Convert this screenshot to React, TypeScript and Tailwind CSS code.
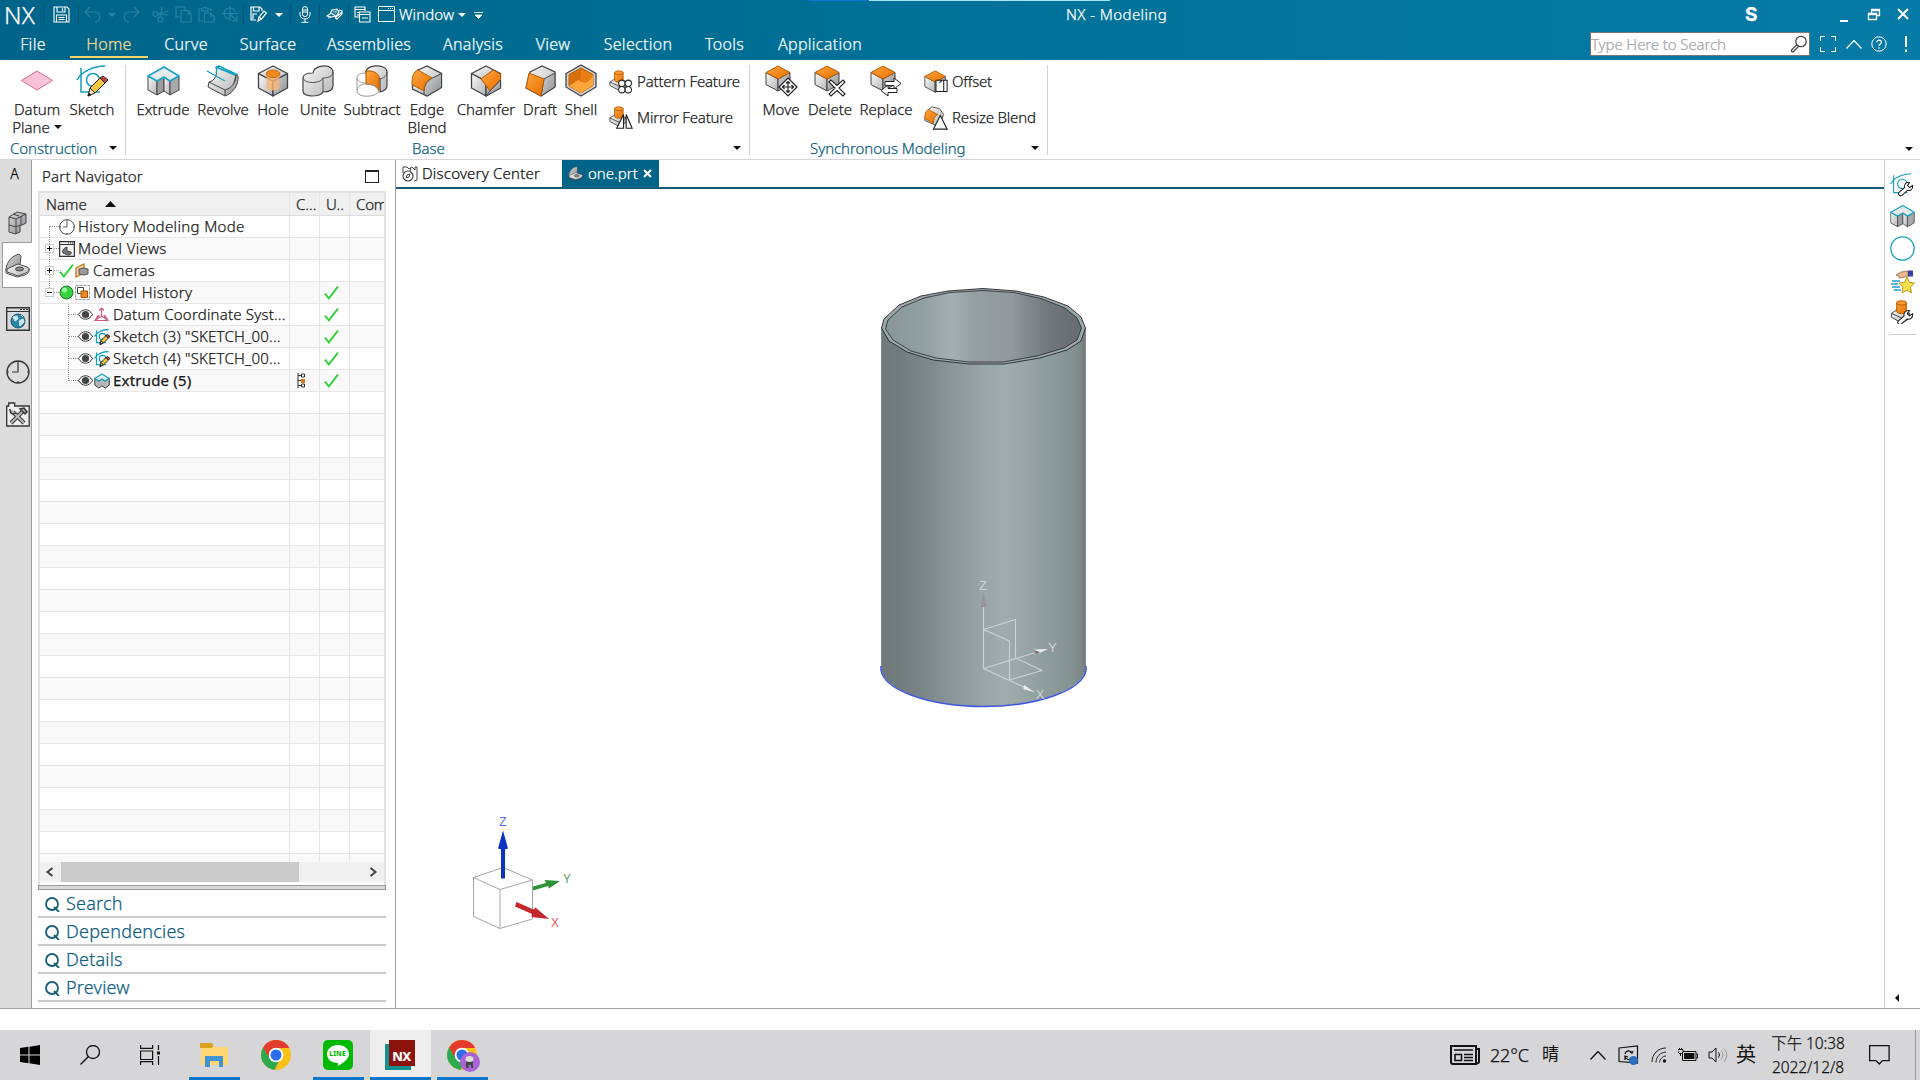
import type { ReactNode } from "react";

type IconProps = { w: number; h?: number; box?: string; cls?: string; children: ReactNode };

function Ico({ w, h, box, cls = "", children }: IconProps) {
  return (
    <svg width={w} height={h ?? w} viewBox={box ?? `0 0 ${w} ${h ?? w}`} fill="none" className={`shrink-0 ${cls}`}>
      {children}
    </svg>
  );
}

const Down = ({ cls = "text-[#111]" }: { cls?: string }) => (
  <svg width="8" height="4" viewBox="0 0 8 4" className={`shrink-0 ${cls}`}>
    <path d="M0 0h8L4 4z" fill="currentColor" />
  </svg>
);

const Defs = () => (
  <svg width="0" height="0" className="absolute">
    <defs>
      <linearGradient id="or" x1="0" y1="0" x2="1" y2="1">
        <stop offset="0" stopColor="#ffa640" />
        <stop offset="1" stopColor="#e86f00" />
      </linearGradient>
      <linearGradient id="gr" x1="0" y1="0" x2="1" y2="1">
        <stop offset="0" stopColor="#fafafa" />
        <stop offset="1" stopColor="#b4b4b6" />
      </linearGradient>
      <linearGradient id="dk" x1="0" y1="0" x2="1" y2="1">
        <stop offset="0" stopColor="#d2d3d5" />
        <stop offset="1" stopColor="#8e9093" />
      </linearGradient>
      <linearGradient id="wall" x1="0" x2="1" y1="0" y2="0">
        <stop offset="0" stopColor="#6f797b" />
        <stop offset="0.1" stopColor="#727d7f" />
        <stop offset="0.2" stopColor="#7b8689" />
        <stop offset="0.35" stopColor="#8a9698" />
        <stop offset="0.5" stopColor="#99a5a6" />
        <stop offset="0.6" stopColor="#a1acad" />
        <stop offset="0.7" stopColor="#99a5a6" />
        <stop offset="0.85" stopColor="#8b9999" />
        <stop offset="0.94" stopColor="#839191" />
        <stop offset="0.97" stopColor="#7f8b8b" />
        <stop offset="1" stopColor="#717a7c" />
      </linearGradient>
      <linearGradient id="inner" x1="0" x2="1" y1="0" y2="0">
        <stop offset="0" stopColor="#88969a" />
        <stop offset="0.2" stopColor="#93a0a2" />
        <stop offset="0.34" stopColor="#a3afb0" />
        <stop offset="0.45" stopColor="#969fa1" />
        <stop offset="0.65" stopColor="#92999c" />
        <stop offset="0.72" stopColor="#838a8d" />
        <stop offset="0.85" stopColor="#6f7679" />
        <stop offset="1" stopColor="#666d70" />
      </linearGradient>
    </defs>
  </svg>
);

/* ---------- solids shared by the ribbon and the trees ---------- */

const ExtrudeShape = () => (
  <g strokeLinejoin="round">
    <path d="M1 11v14l9 5V16z" fill="url(#gr)" stroke="#444" />
    <path d="M10 16v14l7-4V12z" fill="#9b9da0" stroke="#444" />
    <path d="M17 12v14l6 4V16z" fill="url(#gr)" stroke="#444" />
    <path d="M23 16v14l9-5V11z" fill="#a6a8ab" stroke="#444" />
    <path d="M1 11 17 2l15 9-9 5-6-4-7 4z" fill="#e6e8ea" stroke="#18a3c4" strokeWidth="1.6" />
  </g>
);

const SketchShape = ({ tool }: { tool: ReactNode }) => (
  <g>
    <path d="M5 3v24h19M1 15C6 6 18 1 29 1" stroke="#14a0c0" strokeWidth="1.5" />
    <circle cx="17" cy="15" r="6.5" stroke="#14a0c0" strokeWidth="1.5" />
    {tool}
  </g>
);

const Pencil = () => (
  <g strokeLinejoin="round" stroke="#222">
    <path d="m12 31 2-8 5 5z" fill="#f7e6b4" />
    <path d="m14 23 10-10 5 5-10 10z" fill="#f3c740" />
    <path d="m24 13 3-2 5 4-3 3z" fill="#c64444" />
    <path d="m12 31 .8-3 2 2z" fill="#111" />
  </g>
);

const Wrench = () => (
  <path
    d="m12 27 8-7c-1-4 2-8 7-7l-3 4 3 3 4-3c1 5-3 8-7 7l-8 7c-3 1-5-1-4-4z"
    fill="#fff"
    stroke="#222"
    strokeWidth="1.4"
    strokeLinejoin="round"
  />
);

const Cube = ({ top = "url(#gr)" }: { top?: string }) => (
  <g stroke="#3f4144" strokeWidth="1.3" strokeLinejoin="round">
    <path d="M1.5 8.500v14.500L16 31V16z" fill="url(#gr)" />
    <path d="M30.500 8.500v14.500L16 31V16z" fill="url(#dk)" />
    <path d="M1.500 8.500 16 1l14.500 7.500L16 16z" fill={top} />
  </g>
);

const SmallCube = () => (
  <g stroke="#3f4144" strokeLinejoin="round">
    <path d="M1 7.500v12L13 26V14z" fill="url(#gr)" />
    <path d="M25 7.500v12L13 26V14z" fill="url(#dk)" />
    <path d="M1 7.500 13 1l12 6.500L13 14z" fill="url(#or)" stroke="#b35a00" />
  </g>
);

const Boss = () => (
  <g strokeLinejoin="round">
    <path d="M1 14 9 9l11 5v5l-8 5-11-6z" fill="url(#gr)" stroke="#444" />
    <path d="m1 14 11 5v5M12 19l8-5" stroke="#444" />
    <path d="M6.500 3v9c0 3 10 3 10 0V3z" fill="url(#or)" stroke="#b35a00" />
    <ellipse cx="11.500" cy="3.200" rx="5" ry="2.200" fill="#ff9a2e" stroke="#b35a00" />
  </g>
);

const Bracket = () => (
  <g strokeLinejoin="round">
    <path d="M1 16C2 8 7 3 14 1l2 2-1 9-7 6-5 1z" fill="url(#dk)" stroke="#4a4c4e" />
    <path d="m2 16 11-5 9 3c3 1 3 4-1 6l-8 3-11-4z" fill="url(#gr)" stroke="#4a4c4e" />
    <ellipse cx="14.500" cy="16" rx="4" ry="2" fill="#888" stroke="#444" />
    <path d="M1 16v4l11 4 8-2c4-2 4-3 4-6" stroke="#4a4c4e" />
  </g>
);

/* ---------- title bar ---------- */

const Bar = () => <span className="h-[21px] w-px bg-[#0a5474]" />;

const qi = "flex h-[28px] items-center justify-center";

function TitleBar() {
  return (
    <div className="relative flex h-[29px] items-center text-white">
      <span className="flex h-[29px] w-[43px] items-center pl-[4px] text-[24px] leading-none tracking-[0.2px]">NX</span>
      <Bar />
      <span className={`${qi} w-[34px]`}>
        <Ico w={17}>
          <path d="M1 1h13l2 2v13H1zM4 1v5h8V1M9.500 2v3M3.500 16V9h10v7M5.500 11.500h6M5.500 13.500h6" stroke="#fff" strokeWidth="1.1" />
        </Ico>
      </span>
      <Bar />
      <span className={`${qi} w-[26px] text-[#2a83a6]`}>
        <Ico w={17}>
          <path d="M6 1 1 6l5 5M1 6h9c8 0 7 9 1 10" stroke="currentColor" strokeWidth="1.200" />
        </Ico>
      </span>
      <span className={`${qi} w-[13px]`}><Down cls="text-[#2a83a6]" /></span>
      <span className={`${qi} w-[26px] text-[#2a83a6]`}>
        <Ico w={17}>
          <path d="m11 1 5 5-5 5M16 6H7C-1 6 0 15 6 16" stroke="currentColor" strokeWidth="1.200" />
        </Ico>
      </span>
      <span className="flex pl-[5px] text-[#2a83a6]">
        <span className={`${qi} w-[23px]`}>
          <Ico w={17}>
            <g stroke="currentColor" strokeWidth="1.100">
              <circle cx="3.500" cy="8" r="2.500" />
              <circle cx="8.500" cy="13.500" r="2.500" />
              <path d="M6 8.500 16 5M8 11l2-10M6 8l10 1" />
            </g>
          </Ico>
        </span>
        <span className={`${qi} w-[23px]`}>
          <Ico w={17}>
            <path d="M5 11H1V1h9v3M6 4.500h7l3 3V16H6zM13 4.500V8h3" stroke="currentColor" strokeWidth="1.100" />
          </Ico>
        </span>
        <span className={`${qi} w-[23px]`}>
          <Ico w={17}>
            <path d="M5 15H1V3h3m6 0h3v2M4 2h2l1-1 1 1h2v3H4zM6.500 7h6l3.500 3v6H6.500zM12.500 7v3H16" stroke="currentColor" strokeWidth="1.100" />
          </Ico>
        </span>
        <span className={`${qi} w-[25px]`}>
          <Ico w={17}>
            <path d="M8 0v15M0 7.500h16M13 6A5.500 5.500 0 1 0 7 13M8 8l7 7M15 10v5h-5" stroke="currentColor" strokeWidth="1.100" />
          </Ico>
        </span>
      </span>
      <Bar />
      <span className={`${qi} w-[28px]`}>
        <Ico w={17}>
          <path d="M6 14H1V1h9l2 2v2M3.500 1v4H9V1M3 13V8h4M8 15l1-4 5-6 2.500 2-5 6zM9 11l2.500 2" stroke="#fff" strokeWidth="1.200" />
        </Ico>
      </span>
      <span className={`${qi} w-[18px] pr-1`}><Down cls="text-white" /></span>
      <Bar />
      <span className={`${qi} w-[28px]`}>
        <Ico w={12} h={17}>
          <rect x="3.500" y="0.600" width="5" height="10" rx="2.500" stroke="#fff" />
          <path d="M1 6v2.500c0 6 10 6 10 0V6M6 13v3M2.500 16.300h7M4 4h4M4 6h4" stroke="#fff" />
        </Ico>
      </span>
      <Bar />
      <span className={`${qi} w-[28px]`}>
        <Ico w={17}>
          <path d="m1 10 3-2 2-4 5-1 2 3-3 4-5 1zM5 7l6 4M9 12l7-6M13 4l3 1v3l-5 5-2-1M6 11l-4 1" stroke="#fff" strokeWidth="1.100" />
          <path d="m6 5 5-1 1 2-3 2z" fill="#fff" opacity=".4" />
        </Ico>
      </span>
      <Bar />
      <span className={`${qi} w-[27px]`}>
        <Ico w={17}>
          <path d="M5 11H1V1h10v4M1 3.500h10M5.500 6H16v10H5.500zM5.500 8.500H16M3 6.500h2M3 9h2M8 12h6" stroke="#fff" strokeWidth="1.100" />
        </Ico>
      </span>
      <span className={`${qi} w-[21px]`}>
        <Ico w={17}>
          <path d="M.5.500h16v15H.5zM.5 4.500h16M10 2.500h1m1 0h1m1 0h1" stroke="#fff" />
        </Ico>
      </span>
      <span className="w-[61px] pb-[2px] pl-[2px] text-[15px] leading-[26px] tracking-[0.1px]">Window</span>
      <Down cls="text-white" />
      <Ico w={9} h={7} cls="ml-[8px] mt-[2px]">
        <path d="M0 .5h9M1 3h7L4.500 6.500z" stroke="#fff" fill="#fff" strokeWidth=".8" />
      </Ico>
      <span className="ml-[583px] pb-px text-[15px] tracking-[0.4px]">NX - Modeling</span>
      <span className="ml-auto mr-[76px] w-[12px] font-['Inter'] text-[19px] font-bold leading-[29px]">S</span>
      <Ico w={80} h={15} cls="mr-[7px]">
        <path d="M7 14h8" stroke="#fff" strokeWidth="2" />
        <path d="M38.500 6.500V2.500h8v6h-3M35.500 6.500h8v6h-8zM38 3.500h9M35 7.500h9" stroke="#fff" strokeWidth="1.300" />
        <path d="m65 2 10 10M75 2 65 12" stroke="#fff" strokeWidth="2" />
      </Ico>
      <span className="absolute left-[809px] top-0 h-px w-[60px] bg-[#0a78d4]" />
      <span className="absolute left-[869px] top-0 h-px w-[241px] bg-[#a5e3f5]" />
    </div>
  );
}

const menus: [string, string][] = [
  ["Curve", "w-[76px]"],
  ["Surface", "w-[88px]"],
  ["Assemblies", "w-[114px]"],
  ["Analysis", "w-[94px]"],
  ["View", "w-[66px]"],
  ["Selection", "w-[104px]"],
  ["Tools", "w-[69px]"],
  ["Application", "w-[122px]"],
];

function MenuBar() {
  return (
    <div className="flex h-[31px] text-[16px] leading-[30px] tracking-[0.3px] text-[#f4fbfe]">
      <span className="mr-[4px] w-[66px] text-center">File</span>
      <span className="h-[29px] w-[78px] border-b-2 border-[#f5d264] text-center leading-[30px] text-[#f5d98a]">Home</span>
      {menus.map(([t, w]) => (
        <span key={t} className={`${w} text-center`}>{t}</span>
      ))}
      <div className="ml-auto mr-[12px] flex items-center pb-px">
        <span className="flex h-[24px] w-[220px] items-center justify-between border border-[#777] bg-white pr-px text-[15px] leading-[20px] tracking-[-0.1px] text-[#a8a8a8]">
          Type Here to Search
          <Ico w={18}>
            <circle cx="11" cy="6.500" r="5.200" stroke="#444" strokeWidth="1.300" />
            <path d="M7 9.500 1.500 15c-.5 1.500 1 2.500 2 1.500L9 11" stroke="#444" strokeWidth="1.300" />
          </Ico>
        </span>
        <Ico w={16} cls="ml-[10px]"><path d="M.5 5V.5H5M11 .5h4.500V5M15.500 11v4.500H11M5 15.500H.5V11" stroke="#fff" /></Ico>
        <Ico w={16} h={9} cls="ml-[10px]"><path d="m.5 8.500 7.500-8 7.500 8" stroke="#fff" strokeWidth="1.200" /></Ico>
        <Ico w={16} cls="ml-[9px]">
          <circle cx="8" cy="8" r="7.200" stroke="#fff" />
          <path d="M5.800 6.300c0-3 4.600-3 4.600 0C10.400 8 8 8 8 10M8 11.300v1.400" stroke="#fff" strokeWidth="1.200" />
        </Ico>
        <Ico w={4} h={16} cls="ml-[17px]"><path d="M2 0v11M2 13.500V16" stroke="#fff" strokeWidth="2" /></Ico>
      </div>
    </div>
  );
}

/* ---------- ribbon ---------- */

function Big({ w, label, children }: { w: string; label: ReactNode; children: ReactNode }) {
  return (
    <div className={`flex ${w} shrink-0 flex-col items-center`}>
      <Ico w={32} cls="overflow-visible">{children}</Ico>
      <span className="mt-[3px] whitespace-nowrap text-center text-[15px] leading-[18px] text-[#1a1a1a]">{label}</span>
    </div>
  );
}

function Small({ label, children }: { label: string; children: ReactNode }) {
  return (
    <div className="flex h-[36px] items-center gap-[4px] whitespace-nowrap text-[15px] tracking-[-0.2px] text-[#1a1a1a]">
      <Ico w={24} box="0 0 28 28" cls="mt-[2px]">{children}</Ico>
      {label}
    </div>
  );
}

function Group({ w, pad, labelPad, label, children }: { w: string; pad: string; labelPad: string; label: string; children: ReactNode }) {
  return (
    <div className={`flex ${w} h-[90px] flex-col border-r border-[#d4d4d4]`}>
      <div className={`flex h-[73px] shrink-0 ${pad}`}>{children}</div>
      <div className={`flex h-[20px] shrink-0 items-center justify-between pr-[8px] ${labelPad}`}>
        <span className="text-[15px] leading-[20px] tracking-[-0.05px] text-[#0d5f82]">{label}</span>
        <Down />
      </div>
    </div>
  );
}

function Ribbon() {
  return (
    <div className="flex h-[100px] border-b border-[#d6d6d6] bg-white pt-[5px]">
      <Group w="w-[126px]" pad="pl-[9px]" labelPad="pl-[10px]" label="Construction">
        <Big w="w-[56px]" label={<>Datum<br /><span className="inline-flex items-center gap-[4px]">Plane <Down /></span></>}>
          <path d="M.5 15.500 16 6l15.500 9.500L16 25z" fill="#f8c3d6" stroke="#d8698f" />
        </Big>
        <Big w="w-[54px]" label="Sketch"><SketchShape tool={<Pencil />} /></Big>
      </Group>
      <Group w="w-[624px]" pad="pl-[7px]" labelPad="pl-[286px]" label="Base">
        <Big w="w-[60px]" label="Extrude"><ExtrudeShape /></Big>
        <Big w="w-[60px]" label="Revolve">
          <path d="m9 2 20 8-3 12-8 9L1 22l1-5c6-1 9-8 7-15z" fill="url(#gr)" stroke="#444" />
          <path d="m18 31 0-6c7-2 11-8 11-15l2 1c1 9-5 17-13 20z" fill="url(#dk)" stroke="#444" />
          <path d="m2 17 16 8" stroke="#444" />
          <path d="m9 2 3-1 19 9M9 2l19 8M0 6l18 10M9 2c1 2 1 4 0 6" stroke="#18a3c4" strokeWidth="1.400" />
        </Big>
        <Big w="w-[40px]" label="Hole">
          <Cube />
          <path d="M9.500 9v14c0 3 13 3 13 0V9z" fill="#f6b775" opacity=".8" />
          <ellipse cx="16" cy="8.800" rx="6.800" ry="3.800" fill="#f58a1c" stroke="#c96a08" />
        </Big>
        <Big w="w-[50px]" label="Unite">
          <path d="M1 13c0-4 4-5 10-5 1-7 13-9 18-5 1 1 2 2 2 4v14c0 4-4 6-10 6-3 5-20 6-20-1z" fill="url(#gr)" stroke="#444" strokeWidth="1.200" />
          <path d="M1 13c1 6 18 6 20 0 7 0 10-3 10-6M21 13v14" stroke="#555" />
        </Big>
        <Big w="w-[58px]" label="Subtract">
          <path d="M10 6c2-7 21-7 21 1v14c0 3-3 5-7 6V14C22 11 16 9 10 9z" fill="url(#gr)" stroke="#444" strokeWidth="1.200" />
          <path d="M10 6c9-1 14 4 13 8v12c-2-4-6-7-13-7z" fill="url(#or)" stroke="#b35a00" />
          <path d="M10 8C4 8 1 10 1 13v13c0 7 19 7 22 0-1-4-6-7-13-7C5 19 2 21 1 25M1 13c1 4 5 5 9 5" stroke="#999" />
          <path d="M24 14c5-1 7-4 7-7" stroke="#555" />
        </Big>
        <Big w="w-[52px]" label={<>Edge<br />Blend</>}>
          <path d="M7 5 16 1l14.500 7.500v14L16 31 1.500 24v-4z" fill="url(#gr)" stroke="#3f4144" strokeWidth="1.300" />
          <path d="m30.500 8.500-10 5C15 17 13 21 13 27v2.500l3 1.500 14.500-8.500z" fill="url(#dk)" stroke="#3f4144" />
          <path d="m7 5 14 8c-5 2-8 6-8 13L1 19.500C1 12 2 7 7 5z" fill="url(#or)" stroke="#b35a00" />
        </Big>
        <Big w="w-[66px]" label="Chamfer">
          <Cube />
          <path d="m23 5 7.500 4v6L20 26l-9-12z" fill="url(#or)" stroke="#b35a00" />
          <path d="m16 31 4-5 10.500-11v8z" fill="url(#dk)" stroke="#444" />
        </Big>
        <Big w="w-[42px]" label="Draft">
          <path d="M6 7 18 1l13 6v15l-14 9-15-8z" fill="url(#gr)" stroke="#444" strokeWidth="1.200" />
          <path d="m31 8-11 6-3 17 14-9z" fill="url(#dk)" stroke="#444" />
          <path d="m5 8 15 6-3 17-15-8z" fill="url(#or)" stroke="#b35a00" />
        </Big>
        <Big w="w-[48px]" label={<span className="mr-[8px]">Shell</span>}>
          <g transform="translate(-4 0)">
            <path d="M1 8.500 16 0l15 8.500V22l-15 9L1 22z" fill="#d0d2d4" stroke="#444" strokeWidth="1.300" />
            <path d="M4 9.500 16 3l12 6.500v11L16 28 4 21z" fill="#e87d14" stroke="#b35a00" />
            <path d="m4 9.500 12-5v9L8 20l-4 1z" fill="#d66f0c" />
            <path d="m4 21 9-6 6 3c5-1 8-4 9-9v11.500L16 28z" fill="#ffa53c" />
          </g>
        </Big>
        <div className="-mt-[2px]">
          <Small label="Pattern Feature">
            <Boss />
            <g stroke="#222" fill="#fff" strokeWidth="1.200">
              <circle cx="15" cy="15.500" r="3.700" /><circle cx="22.500" cy="15.500" r="3.700" />
              <circle cx="15" cy="23" r="3.700" /><circle cx="22.500" cy="23" r="3.700" />
            </g>
          </Small>
          <Small label="Mirror Feature">
            <Boss />
            <path d="m17 10-8 16h8zM20 10v16h7z" fill="#fff" stroke="#222" strokeWidth="1.300" />
          </Small>
        </div>
      </Group>
      <Group w="w-[298px]" pad="pl-[9px]" labelPad="pl-[60px]" label="Synchronous Modeling">
        <Big w="w-[44px]" label="Move">
          <SmallCube />
          <path d="m23 13 9 9-9 9-9-9z" fill="#fff" stroke="#222" strokeWidth="1.200" />
          <path d="M23 17v10M18 22h10M21 18.500l2-2 2 2M21 25.500l2 2 2-2M19.500 20l-2 2 2 2M26.500 20l2 2-2 2" stroke="#222" strokeWidth="1.200" />
        </Big>
        <Big w="w-[54px]" label="Delete">
          <SmallCube />
          <path d="m15 17 2-2 6 5.500 6-5.500 2 2-6 6 6 6-2 2-6-5.500-6 5.500-2-2 6-6z" fill="#fff" stroke="#222" strokeWidth="1.100" />
        </Big>
        <Big w="w-[58px]" label="Replace">
          <SmallCube />
          <path d="M15 16.500h9v-3.500l7 5.500-7 5.500v-3.500h-9z" fill="#fff" stroke="#222" />
          <path d="M27 23.500h-9V20l-7 5.500 7 5.500v-3.500h9z" fill="#fff" stroke="#222" />
        </Big>
        <div className="-mt-[2px] pl-[9px]">
          <Small label="Offset">
            <SmallCube />
            <path d="M14 12h9v13h-9zM18 15l3-3h6v13h-4" fill="#fff" stroke="#222" strokeWidth="1.200" />
          </Small>
          <Small label="Resize Blend">
            <path d="m9 1 9 2 5 7-6 14L1 17c0-9 3-12 8-16z" fill="url(#gr)" stroke="#444" />
            <path d="m5 4 11 6c-4 2-5 5-5 10L1 15c0-6 1-9 4-11z" fill="url(#or)" stroke="#b35a00" />
            <path d="m19 11-8 16h16z" fill="#fff" stroke="#222" strokeWidth="1.300" />
          </Small>
        </div>
      </Group>
      <div className="ml-auto flex items-end pb-[8px] pr-[7px]"><Down /></div>
    </div>
  );
}

/* ---------- left rail ---------- */

const Browser = ({ children, w }: { children: ReactNode; w: number }) => (
  <Ico w={w} box="0 0 24 24">
    <path d="M.7.700h22.600v22.600H.7z" fill="#d9dadb" stroke="#333" strokeWidth="1.400" />
    <path d="M1 4.500h22M14 2.500h2m1 0h2m1 0h2" stroke="#333" />
    {children}
  </Ico>
);

const Clock = ({ w }: { w: number }) => (
  <Ico w={w} box="0 0 24 24">
    <circle cx="12" cy="12" r="11" stroke="#333" strokeWidth="1.300" />
    <path d="M12 3v9H6M12 1v2M12 21v2M1 12h2M21 12h2" stroke="#333" strokeWidth="1.200" />
  </Ico>
);

function Rail() {
  return (
    <div className="flex w-[32px] shrink-0 flex-col items-center border-r border-[#9c9c9c] bg-[#dcdcdc]">
      <span className="mt-[5px] h-[18px] pr-[2px] text-[14px] leading-[18px]">A</span>
      <Ico w={19} h={24} cls="ml-[4px] mt-[28px]">
        <g stroke="#444" strokeLinejoin="round">
          <path d="M1 6 9 1l9 2v9l-6 3v6l-5 2-6-2z" fill="url(#dk)" />
          <path d="m1 6 7 2 10-5M8 8v15M1 14l7 2 4-2M13 5v9M5 3l6 2" />
        </g>
      </Ico>
      <span className="ml-[2px] mt-[7px] flex h-[46px] w-[30px] items-center justify-center border border-r-0 border-[#9c9c9c] bg-white">
        <Ico w={25}><Bracket /></Ico>
      </span>
      <span className="ml-[4px] mt-[19px]">
        <Browser w={24}>
          <circle cx="12" cy="14" r="7" fill="#2b87a8" stroke="#185a75" />
          <path d="m7 10 4-1 1 3-3 2zM13 14l4-2 1 3-4 4zM15 8l2 2" fill="#cfe9f1" stroke="#cfe9f1" />
        </Browser>
      </span>
      <span className="ml-[4px] mt-[29px]"><Clock w={24} /></span>
      <span className="ml-[4px] mt-[18px]">
        <Ico w={24} h={25}>
          <path d="M.7 4h2V1h6v3h14.500v20H.7z" fill="#eee" stroke="#333" strokeWidth="1.300" />
          <path d="m5 21 12-12M7 10l11 11" stroke="#333" strokeWidth="4" />
          <path d="m5 21 12-12M7 10l11 11" stroke="#bbb" strokeWidth="2" />
          <path d="M4 7c0 5 3 6 6 4M14 7l4-1 3 4-2 2z" stroke="#333" strokeWidth="1.500" fill="#aaa" />
        </Ico>
      </span>
    </div>
  );
}

/* ---------- part navigator ---------- */

const Check = ({ w = 15 }: { w?: number }) => (
  <Ico w={w} box="0 0 14 14"><path d="m.8 8 3.700 4.500L13 1.500" stroke="#35d13c" strokeWidth="1.800" /></Ico>
);
const Eye = () => (
  <Ico w={15} h={11}>
    <path d="M.5 5.500C4-.8 11-.8 14.500 5.500 11 11.800 4 11.800.5 5.500z" fill="#fff" stroke="#333" />
    <circle cx="7.500" cy="5.500" r="3.600" fill="#444" />
  </Ico>
);
const Plus = ({ minus }: { minus?: boolean }) => (
  <span className="z-10 flex size-[9px] items-center justify-center border border-[#ccc] bg-white">
    <svg width="5" height="5" viewBox="0 0 5 5"><path d={minus ? "M0 2.500h5" : "M0 2.500h5M2.500 0v5"} stroke="#111" /></svg>
  </span>
);
const SmallSketch = () => (
  <Ico w={16} box="0 0 32 32">
    <path d="M5 3v24h19M1 15C6 6 18 1 29 1" stroke="#14a0c0" strokeWidth="2.500" />
    <circle cx="17" cy="15" r="6.500" stroke="#14a0c0" strokeWidth="2.500" />
    <g strokeWidth="2"><Pencil /></g>
  </Ico>
);

type TreeRow = { lead: ReactNode; icons: ReactNode; text: string; depth: 0 | 1; bold?: boolean; upToDate?: boolean; extra?: ReactNode };

const rows: TreeRow[] = [
  { depth: 0, lead: null, icons: <Clock w={16} />, text: "History Modeling Mode" },
  {
    depth: 0, lead: <Plus />, text: "Model Views",
    icons: (
      <Ico w={16}>
        <path d="M.6.600h14.800v14.800H.6z" fill="#f2f2f2" stroke="#333" strokeWidth="1.200" />
        <path d="M1 3.500h14M9 2h1m1 0h1m1 0h1" stroke="#333" />
        <path d="M4 12c-1-3 1-5 4-6v4l4 1c1 2-1 3-3 3z" fill="#777" stroke="#444" />
      </Ico>
    ),
  },
  {
    depth: 0, lead: <Plus />, text: "Cameras",
    icons: <><Check /><Ico w={15}><path d="m1 5 8-4v9l-8 4z" fill="#f6d3a9" stroke="#c8761e" strokeWidth="1.300" /><path d="m4 6 5-1 4 1v5l-4 1-5-1z" fill="#999" stroke="#555" /></Ico></>,
  },
  {
    depth: 0, lead: <Plus minus />, text: "Model History", upToDate: true,
    icons: <><Ico w={15}><circle cx="7.500" cy="7.500" r="6.500" fill="#2fd43a" stroke="#2c6b2f" /><circle cx="5.500" cy="5" r="2.500" fill="#a5f5a8" /></Ico><Ico w={15}><path d="M.5.500h14v14H.5z" stroke="#999" strokeDasharray="3 1" /><path d="M2.500 2.500h6v6h-6z" fill="#fff" stroke="#444" /><path d="M6 6h6.500v6.500H6z" fill="#f08a1e" stroke="#a45307" /></Ico></>,
  },
  {
    depth: 1, lead: null, text: "Datum Coordinate Syst...", upToDate: true,
    icons: <><Eye /><Ico w={15}><path d="M7.500 1v8L1 13.500h13L7.500 9M5 3.500 7.500 1 10 3.500M4 11l1-3M11 11l-1-3M1 13.500l3-5M14 13.500l-3-5" stroke="#cf5c86" strokeWidth="1.200" /></Ico></>,
  },
  { depth: 1, lead: null, text: 'Sketch (3) "SKETCH_00...', upToDate: true, icons: <><Eye /><SmallSketch /></> },
  { depth: 1, lead: null, text: 'Sketch (4) "SKETCH_00...', upToDate: true, icons: <><Eye /><SmallSketch /></> },
  {
    depth: 1, lead: null, text: "Extrude (5)", bold: true, upToDate: true,
    icons: (
      <><Eye /><Ico w={16}>
        <path d="M.8 5.500v6.500l4 3 3-2 3.500 2 4-3V5.500l-4 2.500-3.300-2-3.200 2z" fill="#b5b7ba" stroke="#444" />
        <path d="M.8 5.500 8 1l7.200 4.500-4 2.500L8 6 4.800 8z" fill="#e2ebee" stroke="#18a3c4" strokeWidth="1.200" />
      </Ico></>
    ),
    extra: <Ico w={8} h={15}><path d="M1 0v15M1 2.500h3M1 7.500h3M1 12.500h3" stroke="#333" /><path d="M4.500 1h3v3h-3zM4.500 11h3v3h-3z" fill="#fff" stroke="#333" /><path d="M4 6h4v4H4z" fill="#e07a10" /></Ico>,
  },
];

const blanks = Array.from({ length: 22 }, (_, i) => i);
const cell = "h-full shrink-0 border-r border-[#e6e6e6] flex items-center";

function Row({ row, odd }: { row?: TreeRow; odd: boolean }) {
  return (
    <div className={`flex h-[22px] shrink-0 items-center border-b border-[#e6e6e6] ${odd ? "bg-[#f9f9f9]" : "bg-white"}`}>
      <div className={`${cell} w-[250px] whitespace-nowrap text-[15px] text-[#1a1a1a] ${row?.depth ? "tracking-[0.2px]" : "tracking-[0.35px]"}`}>
        {row && (
          <>
            <span className={row.depth ? "flex w-[28px]" : "flex w-[5px]"} />
            <span className="flex w-[14px] items-center">
              {row.lead ?? <span className={row.depth ? "w-0" : "w-[4px]"} />}
              <span className="flex-1 border-t border-dotted border-[#999]" />
            </span>
            <span className={`flex items-center gap-[1px] ${row.depth ? "-ml-[4px] w-[31px]" : "mr-[3px]"}`}>{row.icons}</span>
            <span className={row.depth ? `ml-[4px] ${row.bold ? "font-normal" : ""}` : ""}>{row.text}</span>
          </>
        )}
      </div>
      <div className={`${cell} w-[30px] justify-center pr-[7px]`}>{row?.extra}</div>
      <div className={`${cell} w-[30px] justify-center pr-[6px]`}>{row?.upToDate && <Check />}</div>
      <div className="h-full w-[34px]" />
    </div>
  );
}

function Navigator() {
  return (
    <div className="flex w-[364px] shrink-0 flex-col border-r border-[#9c9c9c] bg-white pl-[6px] pr-[9px]">
      <div className="flex h-[31px] items-center justify-between pl-[4px] pr-[7px] pt-[2px] text-[15px] tracking-[0.2px] text-[#222]">
        Part Navigator
        <span className="h-[13px] w-[14px] border border-t-2 border-[#222]" />
      </div>
      <div className="relative flex h-[694px] flex-col border-2 border-b-0 border-[#e2e2e2]">
        <div className="flex h-[23px] shrink-0 items-center overflow-hidden border-b border-[#ddd] bg-[#f0f0f0] text-[15px] text-[#222]">
          <div className={`${cell} w-[250px] border-[#d0d0d0] pl-[6px]`}>
            Name
            <Ico w={11} h={6} cls="ml-[18px]"><path d="M0 6h11L5.500 0z" fill="#111" /></Ico>
          </div>
          <div className={`${cell} w-[30px] border-[#d0d0d0] pl-[6px]`}>C...</div>
          <div className={`${cell} w-[30px] border-[#d0d0d0] pl-[6px]`}>U..</div>
          <div className="w-[34px] shrink-0 overflow-hidden pl-[6px] tracking-[-0.2px]">Com</div>
        </div>
        <div className="relative flex h-[646px] flex-col overflow-hidden">
          {rows.map((r, i) => <Row key={r.text + i} row={r} odd={i % 2 === 1} />)}
          {blanks.map((i) => <Row key={i} odd={i % 2 === 1} />)}
          <span className="absolute left-[9px] top-[11px] h-[61px] border-l border-dotted border-[#999]" />
          <span className="absolute left-[28px] top-[88px] h-[77px] border-l border-dotted border-[#999]" />
        </div>
        <div className="flex h-[20px] shrink-0 items-center bg-[#f0f0f0]">
          <Ico w={21} h={10} box="0 0 21 10"><path d="m12.500 1-5 4 5 4" stroke="#444" strokeWidth="2" /></Ico>
          <span className="h-full w-[238px] bg-[#cbcbcb]" />
          <Ico w={21} h={10} box="0 0 21 10" cls="ml-auto"><path d="m7.500 1 5 4-5 4" stroke="#444" strokeWidth="2" /></Ico>
        </div>
      </div>
      <div className="h-[5px] border border-[#9c9c9c] bg-[#d8d8d8]" />
      {["Search", "Dependencies", "Details", "Preview"].map((t) => (
        <div key={t} className="flex h-[28px] items-center border-b-2 border-[#cbcbcb] pl-[7px] text-[18px] tracking-[0.2px] text-[#0d5f82]">
          <Ico w={15} cls="mr-[6px] mt-[2px]">
            <circle cx="7" cy="7" r="6" stroke="#155f7d" strokeWidth="1.800" />
            <path d="m9 10 5 5" stroke="#155f7d" strokeWidth="1.800" />
          </Ico>
          {t}
        </div>
      ))}
    </div>
  );
}

/* ---------- graphics window ---------- */

const outer = "881.500,328 884,319 899,305 921,296 948,291 983,288.500 1016,291 1044,297 1068,306 1081,317 1085.500,328 1081,341 1067,350 1040,358 1004,364 969,364 933,360 907,352 889,341";
const innerRing = "885.500,329 888,320 902,307 924,298 950,292.500 983,290.500 1014,292.500 1041,298.500 1065,308 1077,318 1081.500,328 1077,340 1064,348 1037,356 1003,362 969,362 936,358 911,351 893,340";

function Viewport() {
  return (
    <svg width="1488" height="819" viewBox="396 189 1488 819" className="block bg-white font-['Liberation_Sans'] [-webkit-text-stroke:0]">
      <path d="M881.500 328V670C884 689 929 706.500 983.500 706.500S1083 689 1085.500 670V328z" fill="url(#wall)" />
      <path d="M881.500 328V667M1085.500 328V667" stroke="#6b7577" strokeWidth=".7" />
      <polygon points={outer} fill="#9ba7a8" stroke="#22282a" strokeWidth=".9" />
      <polygon points={innerRing} fill="url(#inner)" stroke="#22282a" strokeWidth=".8" />
      <path d="M881 666v4C884 690 929 706.500 983.500 706.500S1083 690 1086 670v-4" fill="none" stroke="#3f57e0" strokeWidth="1.600" />
      <g stroke="#cdd3d4" strokeWidth="1.100" fill="none">
        <path d="M983.500 606V668.500L1034 653M983.500 629.500 1015.500 619.500V658L1042 670.500 1009.500 680V641zM983.500 668.500 1026 688" />
      </g>
      <path d="m983.500 592 3 15h-6z" fill="#929798" />
      <path d="m1048 649-14 .5 1.500 5.500z" fill="#eee" />
      <path d="m1035 692.500-11-7.500-.5 4z" fill="#eee" />
      <path d="m1034 650 2 5 4-3z" fill="#777" />
      <g fill="#cfd4d5" fontSize="13" textAnchor="middle">
        <text x="983" y="590">Z</text><text x="1052.500" y="651.500">Y</text><text x="1040" y="699">X</text>
      </g>
      <path d="m473.500 877.500 29.500-10 29.500 12.500V919l-32.500 9.500-26.500-12zM473.500 877.500 500 889.500l32.500-9.500M500 889.500v39" fill="none" stroke="#a6a6a6" />
      <path d="M501 849h4v29.500h-4z" fill="#0a34c4" />
      <path d="m503 830.500 5 18q-5 2-10 0z" fill="#0a34c4" />
      <path d="m533 886.500 13-3.500-1.500-3L560 881l-11 7.500-1-2.500-15 4.500z" fill="#2d9137" />
      <path d="m516.500 902 17 7.500 2-2L549 919l-17.500-2 .5-3L515 906.500z" fill="#c4282c" />
      <g fontSize="12" textAnchor="middle">
        <text x="503" y="826" fill="#5a6cea">Z</text>
        <text x="567" y="882.500" fill="#5d9c67">Y</text>
        <text x="555" y="926.500" fill="#dc5a5e">X</text>
      </g>
    </svg>
  );
}

function Work() {
  return (
    <div className="flex w-[1488px] shrink-0 flex-col">
      <div className="flex h-[29px] border-b-2 border-[#135a78] pl-[6px] text-[15px] text-[#111]">
        <span className="flex w-[160px] items-center gap-[4px] whitespace-nowrap tracking-[0.2px]">
          <Ico w={16}>
            <path d="M1 1h4l2 2 3-2 3 3V1h2v13l-3 1M1 1v6M9 2l-1 3" stroke="#444" />
            <circle cx="6" cy="10" r="5" fill="#fff" stroke="#444" strokeWidth="1.200" />
            <path d="m4 12 1-3 3-1-1 3z" stroke="#444" />
          </Ico>
          Discovery Center
        </span>
        <span className="flex w-[97px] items-center bg-[#006488] pl-[6px] text-white">
          <Ico w={15} box="0 0 25 25"><Bracket /></Ico>
          <span className="ml-[5px] w-[55px]">one.prt</span>
          <Ico w={9}><path d="m1 1 7 7M8 1 1 8" stroke="#fff" strokeWidth="2" /></Ico>
        </span>
      </div>
      <Viewport />
    </div>
  );
}

function RightBar() {
  return (
    <div className="flex flex-1 flex-col items-center border-l border-[#ccc] pr-px pt-[13px]">
      <Ico w={24} box="0 0 33 33"><SketchShape tool={<Wrench />} /></Ico>
      <Ico w={25} box="0 0 33 33" cls="mt-[7px]"><ExtrudeShape /></Ico>
      <Ico w={25} cls="mt-[7px]"><circle cx="12.500" cy="12.500" r="11.700" stroke="#18a3c4" strokeWidth="1.300" /></Ico>
      <Ico w={25} cls="mt-[8px]">
        <path d="m17 8 2.500 5.500 5 .5-4 4 1 6-4.500-3-5 3 1-6-4-4 5.500-.5z" fill="#fbe04c" stroke="#b89a20" />
        <path d="M2 12h8M1 15h7M2 18h8M4 21h7" stroke="#2a9cc8" strokeWidth="1.300" />
        <path d="m6 6 5-3 7-1v5l-5 1.500-4 .5V7z" fill="#eab98e" stroke="#9c6a3d" strokeWidth=".8" />
        <path d="M18 1.500h5v6h-5z" fill="#3a3fa0" />
      </Ico>
      <Ico w={25} box="0 0 30 31" cls="mt-[5px]">
        <g transform="translate(0 1) scale(1.200)"><Boss /></g>
        <g transform="translate(-2 2) scale(.95)"><Wrench /></g>
      </Ico>
      <span className="mt-[10px] h-px w-[27px] bg-[#ccc]" />
      <Ico w={4} h={8} cls="mb-[6px] mr-[10px] mt-auto"><path d="M4 0v8L0 4z" fill="#111" /></Ico>
    </div>
  );
}

/* ---------- taskbar ---------- */

const Chrome = () => (
  <Ico w={30}>
    <circle cx="15" cy="15" r="15" fill="#fbc116" />
    <path d="M15 15 2 7.500a15 15 0 0 0 11.500 22.400l6-12z" fill="#2da94f" />
    <path d="M15 8h13.300A15 15 0 0 0 2 7.500l6.500 11z" fill="#e33b2e" />
    <circle cx="15" cy="15" r="7.300" fill="#fff" />
    <circle cx="15" cy="15" r="5.500" fill="#2a6fe8" />
  </Ico>
);

function Task({ w, line, bg = "", children }: { w: string; line?: string; bg?: string; children: ReactNode }) {
  return (
    <div className={`flex h-[50px] flex-col items-center ${w} ${bg}`}>
      <div className="flex h-[47px] items-center pt-[3px]">{children}</div>
      {line && <span className={`h-[3px] bg-[#0a76cc] ${line}`} />}
    </div>
  );
}

function Taskbar() {
  return (
    <div className="flex h-[50px] bg-[#d6d6d8] font-normal text-[#111] [-webkit-text-stroke:0]">
      <Task w="w-[60px]">
        <Ico w={20}><path d="m0 3 8.500-1.200v7.700H0zM9.500 1.700 20 0v9.500H9.500zM0 10.500h8.500v7.700L0 17zM9.500 10.500H20V20L9.500 18.300z" fill="#000" /></Ico>
      </Task>
      <Task w="w-[60px]"><Ico w={20}><circle cx="13" cy="7" r="6.500" stroke="#111" strokeWidth="1.300" /><path d="M8.500 11.500.5 19.500" stroke="#111" strokeWidth="1.400" /></Ico></Task>
      <Task w="w-[60px]">
        <Ico w={20}><path d="M.6 0v3.400h12V0M.6 6h12v8.500H.6zM.6 20v-3.400h12V20M18.500 0v5M18.500 11v9" stroke="#111" strokeWidth="1.200" /><path d="M17 6.500h3v3h-3z" fill="#111" /></Ico>
      </Task>
      <Task w="w-[69px]" line="w-[51px]">
        <Ico w={29} h={24}>
          <path d="M1 1h11l2 3h14v18H1z" fill="#ffd873" /><path d="M0 0h12l1.500 3-2 2H0z" fill="#dba11c" />
          <path d="M5 24V13h18v11h-4v-6h-9v6z" fill="#3f94d1" />
        </Ico>
      </Task>
      <Task w="w-[54px]"><Chrome /></Task>
      <Task w="w-[71px]" line="w-[51px]">
        <span className="relative mr-[2px] flex size-[30px] items-center justify-center rounded-[5px] bg-[#00b900]">
          <Ico w={24} h={22}><path d="M12 1c6.500 0 11 4 11 9 0 4-4 8-11 12-.5-1 0-2 0-3C5 19 1 15 1 10s4.500-9 11-9z" fill="#fff" /></Ico>
          <span className="absolute top-[9px] text-[7px] font-extrabold leading-[9px] text-[#00b900]">LINE</span>
        </span>
      </Task>
      <Task w="-ml-[4px] w-[61px]" bg="bg-[#eeeeef]" line="w-[61px]">
        <span className="mr-[2px] flex size-[30px] items-start justify-end bg-[linear-gradient(#13918f,#13918f)] bg-[length:26px_26px] bg-[position:0_4px] bg-no-repeat">
          <span className="flex size-[26px] items-center justify-center bg-[#8c130c] pt-[6px] text-[13px] font-extrabold leading-none tracking-[-0.5px] text-white">NX</span>
        </span>
      </Task>
      <Task w="w-[63px]" line="w-[51px]">
        <span className="relative mr-[2px]"><Chrome />
          <Ico w={20} cls="absolute left-[13px] top-[12px]">
            <circle cx="10" cy="10" r="10" fill="#a864d2" />
            <path d="M6 16v-5c0-5 7-5 7 0v5h-2v-3H8.500v3z" fill="#444" /><ellipse cx="9.500" cy="7" rx="4" ry="3" fill="#ddd" />
          </Ico>
        </span>
      </Task>
      <div className="ml-auto flex items-center">
        <Ico w={30} h={20}>
          <path d="M1 1h25v18H3a2 2 0 0 1-2-2zM26 4h3v13a2 2 0 0 1-3 1" stroke="#111" strokeWidth="2" />
          <path d="M4 5h19M14 9.500h9M14 12.500h9M14 15.500h9M5 9.500h6.500v6H5z" stroke="#111" strokeWidth="1.600" />
        </Ico>
        <span className="ml-[10px] w-[52px] text-[18px] font-light tracking-[-0.2px] [-webkit-text-stroke:0.25px]">22°C</span>
        <span className="w-[48px] pb-[2px] text-[17px]">晴</span>
        <Ico w={16} h={9}><path d="m.5 8.500 7.500-8 7.500 8" stroke="#111" strokeWidth="1.300" /></Ico>
        <Ico w={21} h={20} cls="ml-[12px]">
          <path d="m1 3 18.500-2v17L1 16.500z" stroke="#111" strokeWidth="1.200" />
          <path d="M7 9c1-4 6-4 7-1l1-2M14 8l-2-1M7 15v-4l3 1M7 12c2 3 4 3 5 2" stroke="#111" strokeWidth="1.200" />
          <circle cx="15.500" cy="15.500" r="4.500" fill="#2a6fbd" />
        </Ico>
        <Ico w={16} cls="ml-[12px]">
          <path d="M1 15C1 7 7 1 15 1M5 15.500C5 10 9 5.500 15 5M8.500 15.500c0-3 3-6.500 6.500-6.500" stroke="#222" />
          <circle cx="13.500" cy="14" r="1.700" fill="#111" />
        </Ico>
        <Ico w={20} h={14} cls="ml-[11px]">
          <path d="M4.500 3.500h13.500v9H4.500zM18.500 6H19.500v4h-1" stroke="#111" /><path d="M6 5h10.500v6H6z" fill="#111" />
          <path d="M0 1.500h5v2.500L3.500 5.500h-2L0 4zM1.500 0v1.500M3.500 0v1.500M2.500 5v3" fill="#d6d6d8" stroke="#111" />
        </Ico>
        <Ico w={20} h={16} cls="ml-[10px]">
          <path d="M1 5h3l4-4v14l-4-4H1z" stroke="#111" /><path d="M10.500 5.500q2 2.500 0 5" stroke="#111" /><path d="M13 3.500q4 4.500 0 9M16 1.500q5.500 6.500 0 13" stroke="#999" />
        </Ico>
        <span className="ml-[8px] w-[36px] text-[20px] leading-none">英</span>
        <span className="flex w-[72px] flex-col items-center whitespace-nowrap pb-px text-[15.5px] font-light leading-[24px] tracking-[-0.1px] [-webkit-text-stroke:0.25px]">
          <span>下午 10:38</span>
          <span>2022/12/8</span>
        </span>
        <Ico w={21} h={20} cls="ml-[25px] mr-[25px]"><path d="M.6.600h19.500v15H13.500L10.300 19 7 15.600H.6z" stroke="#111" strokeWidth="1.300" /></Ico>
        <span className="mr-[4px] h-[50px] w-px bg-[#9a9a9c]" />
      </div>
    </div>
  );
}

export default function App() {
  return (
    <div className="flex h-[1080px] w-[1920px] flex-col overflow-hidden bg-white font-['Noto_Sans','Noto_Sans_CJK_TC',sans-serif] font-light [-webkit-text-stroke:0.25px]">
      <Defs />
      <header className="bg-[linear-gradient(90deg,#00648a,#007096_45%,#067ba7)]">
        <TitleBar />
        <MenuBar />
      </header>
      <Ribbon />
      <main className="flex h-[849px] border-b border-[#a5a5a5]">
        <Rail />
        <Navigator />
        <Work />
        <RightBar />
      </main>
      <div className="h-[21px] bg-white" />
      <Taskbar />
    </div>
  );
}
